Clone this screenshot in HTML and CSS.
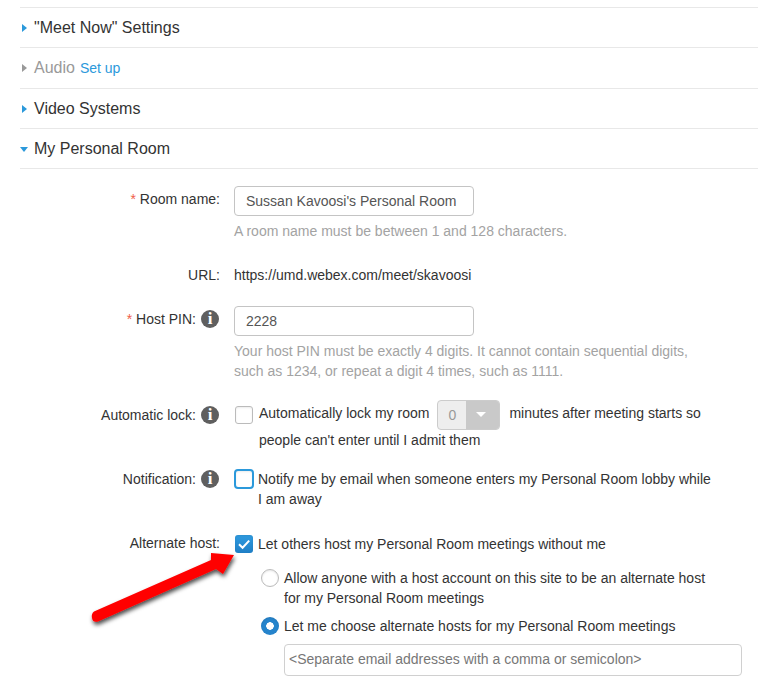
FILE: index.html
```html
<!DOCTYPE html>
<html lang="en">
<head>
<meta charset="utf-8">
<title>My Personal Room</title>
<link rel="stylesheet" href="styles.css">
</head>
<body>
<main class="page">
  <div class="section"><span class="tri tri-right"></span><span class="section-title">"Meet Now" Settings</span></div>
  <div class="section section-tall"><span class="tri tri-right tri-grey"></span><span class="section-title muted">Audio</span><a class="setup">Set up</a></div>
  <div class="section"><span class="tri tri-right"></span><span class="section-title">Video Systems</span></div>
  <div class="section section-last"><span class="tri tri-down"></span><span class="section-title">My Personal Room</span></div>

  <form class="form">
    <div class="row row-name">
      <div class="label"><span><span class="req">*</span> Room name:</span></div>
      <div class="field">
        <div class="input">Sussan Kavoosi's Personal Room</div>
        <p class="hint hint-one">A room name must be between 1 and 128 characters.</p>
      </div>
    </div>
    <div class="row row-url">
      <div class="label"><span>URL:</span></div>
      <div class="field">https://umd.webex.com/meet/skavoosi</div>
    </div>
    <div class="row row-pin">
      <div class="label"><span><span class="req">*</span> Host PIN:</span><span class="info">i</span></div>
      <div class="field">
        <div class="input">2228</div>
        <p class="hint hint-two">Your host PIN must be exactly 4 digits. It cannot contain sequential digits,<br>such as 1234, or repeat a digit 4 times, such as 1111.</p>
      </div>
    </div>
    <div class="row row-lock">
      <div class="label"><span>Automatic lock:</span><span class="info">i</span></div>
      <div class="field check-line">
        <span class="box"></span>
        <div class="lock-text">
          <div class="lock-first"><span>Automatically lock my room</span><span class="select"><span class="select-value">0</span><span class="select-arrow"></span></span><span>minutes after meeting starts so</span></div>
          <div>people can't enter until I admit them</div>
        </div>
      </div>
    </div>
    <div class="row row-notify">
      <div class="label"><span>Notification:</span><span class="info">i</span></div>
      <div class="field check-line">
        <span class="box box-focus"></span>
        <div class="notify-text">Notify me by email when someone enters my Personal Room lobby while I am away</div>
      </div>
    </div>
    <div class="row row-alt">
      <div class="label"><span>Alternate host:</span></div>
      <div class="field">
        <div class="check-line alt-line">
          <span class="box box-checked"><svg viewBox="0 0 18 18" width="18" height="18"><path d="M4 9.2l3.6 3.6L14.2 5.6" fill="none" stroke="#fff" stroke-width="2"/></svg></span>
          <div class="alt-text">Let others host my Personal Room meetings without me</div>
        </div>
        <div class="radios">
          <div class="radio-line"><span class="radio"></span><div>Allow anyone with a host account on this site to be an alternate host<br>for my Personal Room meetings</div></div>
          <div class="radio-line radio-second"><span class="radio radio-on"></span><div>Let me choose alternate hosts for my Personal Room meetings</div></div>
          <div class="textbox">&lt;Separate email addresses with a comma or semicolon&gt;</div>
        </div>
      </div>
    </div>
  </form>
</main>
<svg class="arrow" width="170" height="90" viewBox="0 0 170 90">
  <defs><filter id="s" x="-20%" y="-30%" width="140%" height="160%"><feDropShadow dx="1" dy="3" stdDeviation="2" flood-color="#000" flood-opacity=".7"/></filter></defs>
  <path d="M3 66.5 L120 15 L120 8 L143 10 L132 29 L125 24 L7 76.5 Q2 78 1 73 Q0 69 3 66.5Z" fill="#f00" filter="url(#s)"/>
</svg>
</body>
</html>
```
FILE: styles.css
```css
* { box-sizing: border-box; }
html, body { margin: 0; padding: 0; background: #fff; }
body {
  position: relative;
  height: 684px;
  overflow: hidden;
  font-family: "Liberation Sans", Arial, sans-serif;
  font-size: 14px;
  line-height: 20px;
  color: #333;
}
.page { padding: 7px 1px 0 20px; }
.section {
  display: flex;
  align-items: center;
  height: 40px;
  border-top: 1px solid #e8e8e8;
  font-size: 16px;
}
.section-tall { height: 41px; }
.section-last { height: 41px; border-bottom: 1px solid #e8e8e8; }
.tri { display: block; width: 0; height: 0; flex: none; }
.tri-right {
  margin: 0 7px 0 2px;
  border-left: 5px solid #2b99db;
  border-top: 4.5px solid transparent;
  border-bottom: 4.5px solid transparent;
}
.tri-grey { border-left-color: #999; }
.tri-down {
  margin: 2px 6px 0 0;
  border-top: 5px solid #2b99db;
  border-left: 4.5px solid transparent;
  border-right: 4.5px solid transparent;
}
.section-title { color: #333; }
.section-title.muted { color: #999; }
.setup { margin-left: 5px; font-size: 14px; color: #2b99db; }
.form { display: flex; flex-direction: column; }
.row { display: grid; grid-template-columns: 200px 1fr; column-gap: 14px; }
.label { display: flex; justify-content: flex-end; align-items: flex-start; white-space: pre; }
.req { color: #f0604a; }
.info {
  display: block;
  flex: none;
  width: 18px;
  height: 18px;
  margin: 1px 1px 0 5px;
  border-radius: 50%;
  background: #5f5f5f;
  color: #fff;
  font: bold 17px/18px "Liberation Serif", serif;
  text-align: center;
}
.input {
  width: 240px;
  height: 30px;
  padding: 0 11px;
  border: 1px solid #c4c4c4;
  border-radius: 4px;
  line-height: 28px;
  color: #555;
}
.hint { margin: 0; color: #a3a3a3; }
.hint-one, .hint-two { margin-top: 5px; }
.row-name { margin-top: 17px; }
.row-name .label, .row-pin .label { padding-top: 3px; }
.row-url { margin-top: 24px; }
.row-pin { margin-top: 21px; }
.row-lock { margin-top: 19px; }
.row-lock .label { padding-top: 5px; }
.check-line { display: flex; align-items: flex-start; }
.box {
  display: block;
  flex: none;
  width: 18px;
  height: 18px;
  margin: 6px 6px 0 1px;
  border: 1px solid #bbb;
  border-radius: 3px;
  background: #fff;
  box-shadow: inset 0 1px 2px rgba(0,0,0,.08);
}
.box-focus {
  width: 20px;
  height: 20px;
  margin: 0 4px 0 0;
  border: 2px solid #2b99db;
  border-radius: 4px;
}
.box-checked {
  margin: 0 5px 0 1px;
  border: 0;
  background: linear-gradient(#2f9be0, #1f7fc6);
}
.box-checked svg { display: block; }
.lock-text { flex: 1; }
.lock-first { display: flex; align-items: center; height: 30px; white-space: pre; }
.lock-first > span:first-child, .lock-first > span:last-child { margin-top: -4px; }
.select {
  display: flex;
  flex: none;
  width: 63px;
  height: 30px;
  margin: 0 9px 0 8px;
  border: 1px solid #ccc;
  border-radius: 4px;
  overflow: hidden;
  background: #eee;
}
.select-value { flex: 1; text-align: center; line-height: 28px; color: #999; }
.select-arrow { position: relative; width: 33px; background: #c9c9c9; }
.select-arrow::after {
  content: "";
  position: absolute;
  left: 10px;
  top: 11px;
  border-top: 5px solid #fff;
  border-left: 5.5px solid transparent;
  border-right: 5.5px solid transparent;
}
.row-notify { margin-top: 19px; }
.notify-text { width: 460px; }
.row-alt { margin-top: 26px; }
.row-alt .label { margin-top: -1px; line-height: 18px; }
.alt-line { height: 20px; line-height: 18px; }
.radios { padding-left: 27px; margin-top: 13px; }
.radio-line { display: flex; align-items: flex-start; gap: 5px; }
.radio {
  flex: none;
  display: block;
  width: 18px;
  height: 18px;
  margin-top: 1px;
  border: 1px solid #bbb;
  border-radius: 50%;
  background: #fff;
  box-shadow: inset 0 1px 2px rgba(0,0,0,.1);
}
.radio-on {
  border: 0;
  background: radial-gradient(circle, #fff 0 3.5px, #2584cc 4px);
}
.radio-second { margin-top: 8px; }
.textbox {
  width: 458px;
  height: 32px;
  margin: 8px 0 0 23px;
  padding: 0 4px;
  border: 1px solid #d0d0d0;
  border-radius: 4px;
  line-height: 29px;
  color: #777;
}
.arrow { position: absolute; left: 91px; top: 545px; overflow: visible; }
```
